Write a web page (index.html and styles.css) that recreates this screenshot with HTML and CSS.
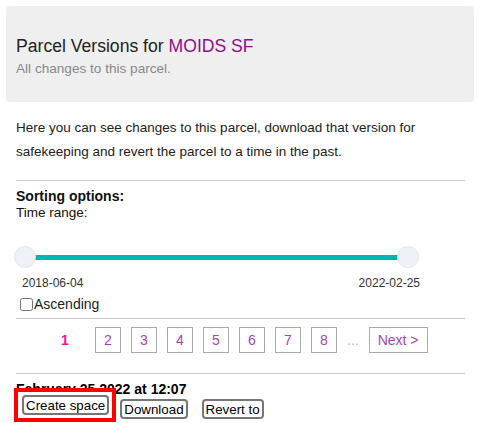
FILE: index.html
```html
<!DOCTYPE html>
<html lang="en">
<head>
  <meta charset="UTF-8">
  <title>Parcel Versions</title>
  <link rel="stylesheet" href="styles.css">
</head>
<body>

<div class="header">
  <h1>Parcel Versions for <a href="#">MOIDS SF</a></h1>
  <p>All changes to this parcel.</p>
</div>

<div class="content">
  <p class="intro">Here you can see changes to this parcel, download that version for safekeeping and revert the parcel to a time in the past.</p>

  <hr>

  <div class="sorting">
    <strong>Sorting options:</strong><br>
    Time range:
  </div>

  <div class="slider">
    <div class="track"></div>
    <span class="handle"></span>
    <span class="handle"></span>
  </div>
  <div class="range-labels">
    <span>2018-06-04</span>
    <span>2022-02-25</span>
  </div>
  <label class="ascending"><input type="checkbox">Ascending</label>

  <hr>

  <div class="pagination">
    <span class="current">1</span>
    <a href="#">2</a>
    <a href="#">3</a>
    <a href="#">4</a>
    <a href="#">5</a>
    <a href="#">6</a>
    <a href="#">7</a>
    <a href="#">8</a>
    <span class="dots">...</span>
    <a href="#" class="next">Next &gt;</a>
  </div>

  <hr>

  <div class="version">
    <h3>February 25 2022 at 12:07</h3>
    <div class="actions">
      <span class="highlight"><button>Create space</button></span>
      <button>Download</button>
      <button class="revert">Revert to</button>
    </div>
  </div>
</div>

</body>
</html>
```

FILE: styles.css
```css
body {
  font-family: Arial, "Liberation Sans", sans-serif;
  color: #222;
  margin: 6px;
  background: #fff;
}

.header {
  background-color: #efefef;
  border-radius: 4px;
  padding: 29px 10px 25px;
}

.header h1 {
  font-size: 17.6px;
  font-weight: normal;
  margin: 0 0 4px;
  line-height: 22px;
}

.header h1 a {
  color: #8f0e8f;
  text-decoration: none;
}

.header p {
  font-size: 13.6px;
  color: #888;
  margin: 0;
  line-height: 16px;
}

.content {
  padding: 0 9px 0 10px;
}

.intro {
  font-size: 13.5px;
  line-height: 24px;
  margin: 14px 0 16px;
}

hr {
  border: none;
  border-top: 1px solid #ccc;
  margin: 0;
}

.sorting {
  font-size: 13.5px;
  line-height: 16px;
  color: #111;
  padding-top: 7px;
}

.sorting strong {
  font-size: 14px;
}

.slider {
  position: relative;
  height: 22px;
  margin: 25px 46px 0 -2px;
}

.track {
  position: absolute;
  left: 11px;
  right: 11px;
  top: 9px;
  height: 5px;
  background: #00b5ad;
}

.handle {
  position: absolute;
  top: 0;
  width: 20px;
  height: 20px;
  border-radius: 50%;
  background: #eef1f5;
  border: 1px solid #e2e5ea;
}

.handle:first-of-type {
  left: 0;
}

.handle:last-of-type {
  right: 0;
}

.range-labels {
  display: flex;
  justify-content: space-between;
  font-size: 12px;
  color: #333;
  margin: 8px 45px 0 6px;
}

.ascending {
  display: flex;
  align-items: center;
  font-size: 14px;
  color: #222;
  margin: 6px 0 6px 4px;
}

.ascending input {
  margin: 0 1px 0 0;
  width: 13px;
  height: 13px;
}

.pagination {
  display: flex;
  align-items: center;
  gap: 10px;
  padding: 8px 0 20px 36px;
  font-size: 14px;
}

.pagination a,
.pagination span {
  display: inline-block;
  min-width: 24px;
  height: 24px;
  line-height: 24px;
  text-align: center;
  border: 1px solid #aaa;
  color: #a545b8;
  text-decoration: none;
}

.pagination .current {
  border-color: transparent;
  color: #f0129a;
  font-weight: bold;
  margin-right: 7px;
}

.pagination .dots {
  border: none;
  color: #bbb;
  min-width: 0;
}

.pagination .next {
  padding: 0 8px;
}

.version h3 {
  font-size: 14px;
  margin: 0;
  padding-top: 8px;
  line-height: 14px;
  color: #000;
}

.actions {
  display: flex;
  align-items: center;
  gap: 4px;
}

.highlight {
  display: inline-block;
  margin: -8px 0 0 -2px;
  padding: 3px 3px 3px 4px;
  border: 4px solid #f00;
  background: #fff;
}

.actions button {
  font-family: Arial, "Liberation Sans", sans-serif;
  font-size: 13.33px;
  color: #000;
  background: #fff;
  border: 2px solid #767676;
  border-radius: 4px;
  padding: 0 2px;
  height: 20px;
}

.actions .revert {
  margin-left: 10px;
}
```
